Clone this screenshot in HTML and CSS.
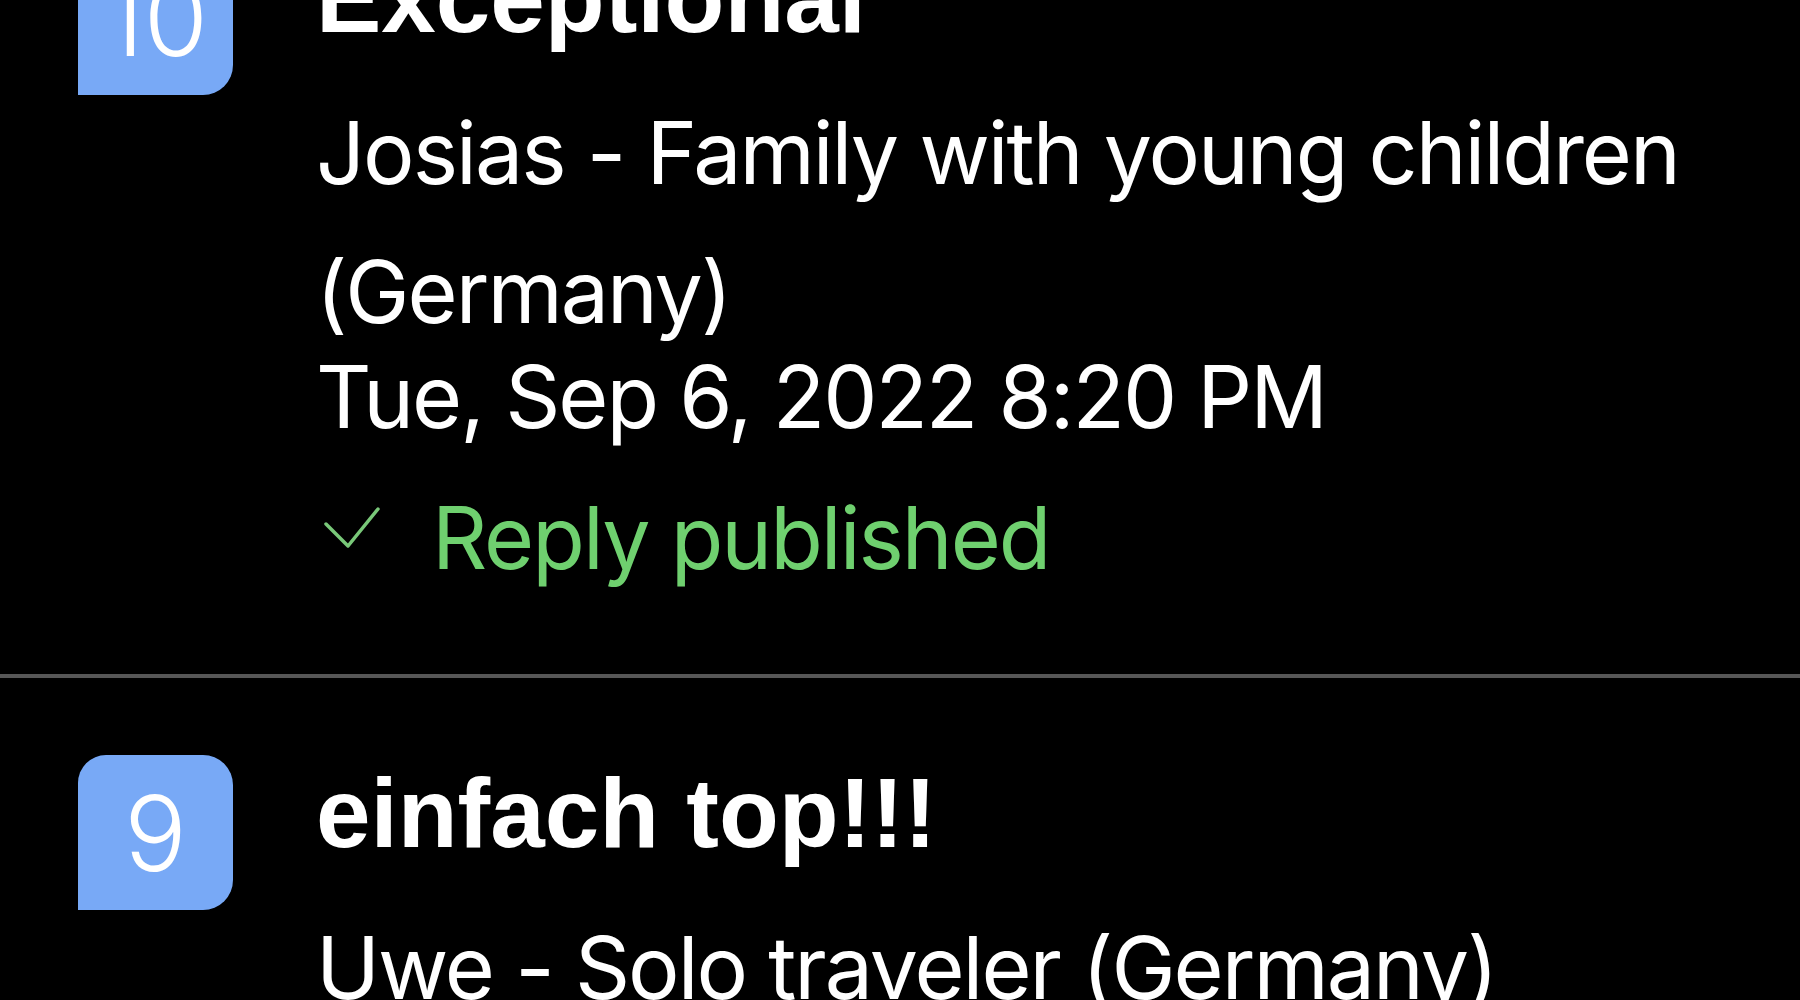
FILE: index.html
```html
<!DOCTYPE html>
<html lang="en">
<head>
    <meta charset="UTF-8">
    <meta name="viewport" content="width=device-width, initial-scale=1.0">
    <title>Reviews</title>
    <link rel="stylesheet" href="styles.css">
</head>
<body>
    <div class="reviews">
        <div class="review">
            <div class="score">10</div>
            <div class="content">
                <div class="title">Exceptional</div>
                <div class="guest">Josias - Family with young children (Germany)</div>
                <div class="date">Tue, Sep 6, 2022 8:20 PM</div>
                <div class="reply">
                    <svg class="check" width="56" height="44" viewBox="0 0 56 44">
                        <path d="M2 18 L24 40 L54 3" fill="none" stroke="#79c879" stroke-width="3.5" stroke-linecap="round" stroke-linejoin="round"/>
                    </svg>
                    <span>Reply published</span>
                </div>
            </div>
        </div>
        <div class="review">
            <div class="score">9</div>
            <div class="content">
                <div class="title">einfach top!!!</div>
                <div class="guest">Uwe - Solo traveler (Germany)</div>
                <div class="date">Mon, Sep 5, 2022 6:14 PM</div>
            </div>
        </div>
    </div>
</body>
</html>
```

FILE: styles.css
```css
body {
    margin: 0;
    padding: 0;
    background-color: #000;
    color: #fff;
    font-family: Inter, "Noto Sans", sans-serif;
    overflow: hidden;
    height: 1000px;
}
.reviews {
    margin-top: -137px;
}
.review {
    display: flex;
    align-items: flex-start;
    padding: 77px 0 84px 78px;
    border-bottom: 4px solid #575757;
}
.score {
    flex: none;
    width: 155px;
    height: 155px;
    background-color: #78a9f6;
    border-radius: 28px 30px 30px 0;
    display: flex;
    align-items: center;
    justify-content: center;
    font-size: 104px;
    font-weight: 300;
    line-height: 1;
}
.content {
    margin-left: 83px;
    font-size: 86px;
    letter-spacing: -2px;
}
.title {
    font-family: "Liberation Sans", Arial, sans-serif;
    font-size: 98px;
    font-weight: 700;
    letter-spacing: 0;
    line-height: 116px;
}
.guest {
    line-height: 139px;
    margin-top: 28px;
}
.date {
    line-height: 70px;
}
.reply {
    display: flex;
    align-items: center;
    margin-top: 54px;
    color: #6fd06f;
}
.check {
    margin-left: 8px;
    margin-right: 52px;
    margin-top: -20px;
}
```
